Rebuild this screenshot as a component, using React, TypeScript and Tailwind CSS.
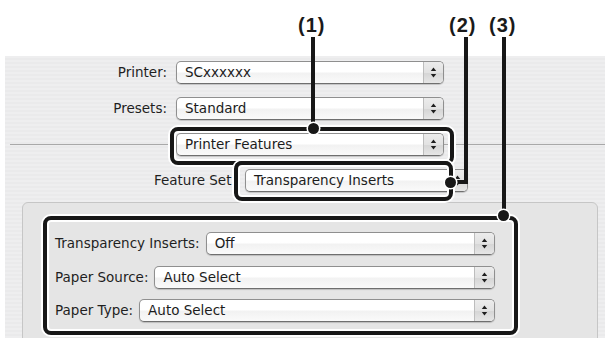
import React from 'react';

const Arrows: React.FC = () => (
    <svg width="7" height="13" viewBox="0 0 7 13" className="block">
        <path d="M3.5 1.5 L6.2 5 L0.8 5 Z" fill="#1e1e1e" />
        <path d="M0.8 8 L6.2 8 L3.5 11.5 Z" fill="#1e1e1e" />
    </svg>
);

const Popup: React.FC<{ text: string; className?: string }> = ({ text, className = '' }) => (
    <div
        className={`relative h-[23px] flex items-stretch rounded-[5px] border border-[#8f8f8f] border-b-[#6f6f6f] bg-[linear-gradient(#ffffff,#ffffff_45%,#f2f2f2_55%,#fafafa)] shadow-[0_1px_1px_rgba(0,0,0,0.18)] ${className}`}
    >
        <div className="flex-1 flex items-center pl-[8px] text-[#1c1c1c] truncate">{text}</div>
        <div className="w-[20px] flex items-center justify-center border-l border-[#bdbdbd] rounded-r-[4px] bg-[linear-gradient(#ececec,#e2e2e2_50%,#d6d6d6_55%,#e6e6e6)]">
            <Arrows />
        </div>
    </div>
);

const Row: React.FC<{ label: string; labelW: string; gap: string; popW: string; text: string; mt: string }> = ({ label, labelW, gap, popW, text, mt }) => (
    <div className={`flex items-center ${mt}`}>
        <div className={`${labelW} text-right text-[#1f1f1f] whitespace-nowrap`}>{label}</div>
        <Popup text={text} className={`${popW} ${gap}`} />
    </div>
);

const CALLOUT = 'absolute border-[4px] border-[#171717] rounded-[8px] shadow-[0_0_0_2px_#ffffff,inset_0_0_0_2px_#ffffff]';
const DOT = 'absolute w-[11px] h-[11px] rounded-full bg-[#171717] shadow-[0_0_0_1.5px_#ffffff]';

export default function App() {
    return (
        <div className="relative w-[605px] h-[338px] overflow-hidden bg-white flex flex-col text-[13.5px] leading-none" style={{ fontFamily: '"DejaVu Sans", "Liberation Sans", sans-serif' }}>
            <div className="h-[56px] shrink-0" />

            {/* dialog sheet */}
            <div className="flex-1 ml-[5px] flex flex-col bg-[repeating-linear-gradient(#eeeeef_0px,#eeeeef_2px,#eaeaeb_2px,#eaeaeb_4px)]">
                <Row label="Printer:" labelW="w-[162px]" gap="ml-[9px]" popW="w-[268px]" text="SCxxxxxx" mt="mt-[5px]" />
                <Row label="Presets:" labelW="w-[162px]" gap="ml-[9px]" popW="w-[268px]" text="Standard" mt="mt-[13px]" />

                <div className="flex items-center mt-[13px]">
                    <div className="ml-[5px] w-[166px] h-px bg-[#a9a9a9]" />
                    <Popup text="Printer Features" className="w-[268px]" />
                    <div className="flex-1 h-px bg-[#a9a9a9]" />
                </div>

                <Row label="Feature Set:" labelW="w-[231px]" gap="ml-[9px]" popW="w-[223px]" text="Transparency Inserts" mt="mt-[13px]" />

                {/* tab panel */}
                <div className="mt-[10px] ml-[17px] mr-[7px] h-[160px] shrink-0 rounded-[6px] border border-[#c6c6c6] bg-[#e5e5e5] pt-[29px] pl-[32px]">
                    <div className="w-[440px] flex flex-col">
                        <div className="flex items-center">
                            <span className="text-[#1f1f1f] whitespace-nowrap">Transparency Inserts:</span>
                            <Popup text="Off" className="flex-1 ml-[6px]" />
                        </div>
                        <div className="flex items-center mt-[11px]">
                            <span className="text-[#1f1f1f] whitespace-nowrap">Paper Source:</span>
                            <Popup text="Auto Select" className="flex-1 ml-[6px]" />
                        </div>
                        <div className="flex items-center mt-[10px]">
                            <span className="text-[#1f1f1f] whitespace-nowrap">Paper Type:</span>
                            <Popup text="Auto Select" className="flex-1 ml-[6px]" />
                        </div>
                    </div>
                </div>
            </div>

            {/* callout annotations */}
            <div className="absolute inset-0 pointer-events-none" style={{ fontFamily: '"Liberation Sans", Arial, sans-serif' }}>
                <div className="absolute left-[298px] top-[15px] text-[20px] font-bold tracking-[1px] text-[#1a1a1a]">(1)</div>
                <div className="absolute left-[449px] top-[15px] text-[20px] font-bold tracking-[1px] text-[#1a1a1a]">(2)</div>
                <div className="absolute left-[489px] top-[15px] text-[20px] font-bold tracking-[1px] text-[#1a1a1a]">(3)</div>

                <div className={`${CALLOUT} left-[170px] top-[127px] w-[284px] h-[38px]`} />
                <div className={`${CALLOUT} left-[234px] top-[161px] w-[219px] h-[40px]`} />
                <div className={`${CALLOUT} left-[43px] top-[216px] w-[475px] h-[119px]`} />

                <div className="absolute left-[311px] top-[37px] w-[4px] h-[92px] bg-[#171717]" />
                <div className="absolute left-[464px] top-[37px] w-[4px] h-[147px] bg-[#171717]" />
                <div className="absolute left-[450px] top-[180px] w-[18px] h-[4px] bg-[#171717]" />
                <div className="absolute left-[502px] top-[37px] w-[4px] h-[178px] bg-[#171717]" />

                <div className={`${DOT} left-[308px] top-[123px]`} />
                <div className={`${DOT} left-[445px] top-[177px]`} />
                <div className={`${DOT} left-[498px] top-[210px]`} />
            </div>
        </div>
    );
}
